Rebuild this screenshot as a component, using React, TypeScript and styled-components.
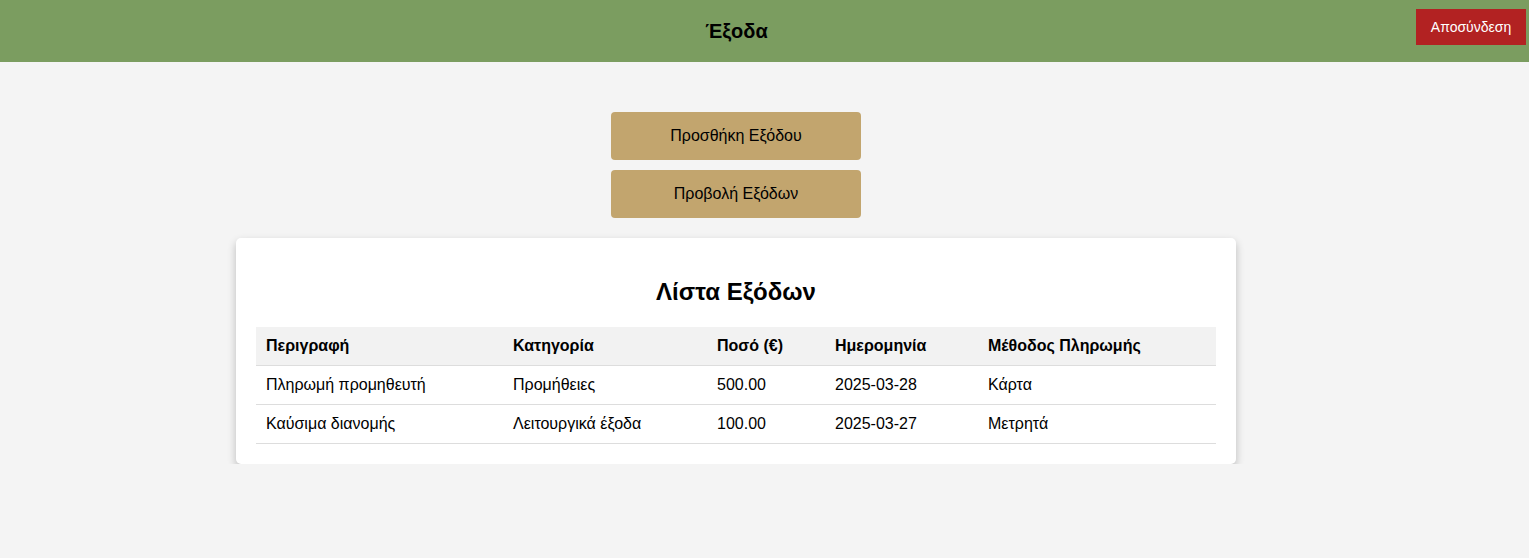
import React from "react";
import styled, { createGlobalStyle } from "styled-components";

const Global = createGlobalStyle`
  html, body { margin: 0; padding: 0; }
  body {
    background: #f4f4f4;
    font-family: "Liberation Sans", Arial, sans-serif;
    color: #000;
  }
`;

const Header = styled.header`
  display: grid;
  grid-template-columns: 1fr auto;
  align-items: start;
  column-gap: 3px;
  height: 62px;
  background: #7b9d60;
  padding-right: 3px;
  box-sizing: border-box;
`;

const Title = styled.h1`
  margin: 0;
  padding-left: 60px;
  font-size: 20px;
  font-weight: bold;
  line-height: 62px;
  text-align: center;
`;

const Logout = styled.button`
  margin-top: 9px;
  width: 110px;
  height: 36px;
  border: none;
  background: #b22222;
  color: #fff;
  font-family: inherit;
  font-size: 14px;
  cursor: pointer;
`;

const Main = styled.main`
  display: flex;
  flex-direction: column;
  align-items: center;
  padding: 50px 57px 0 0;
`;

const Actions = styled.div`
  display: flex;
  flex-direction: column;
  gap: 10px;
  margin-bottom: 20px;
`;

const ActionButton = styled.button`
  width: 250px;
  height: 48px;
  border: none;
  border-radius: 4px;
  background: #c2a56e;
  color: #000;
  font-family: inherit;
  font-size: 16px;
  cursor: pointer;
`;

const Card = styled.section`
  width: 1000px;
  box-sizing: border-box;
  background: #fff;
  border-radius: 5px;
  padding: 20px;
  box-shadow: 0 4px 8px rgba(0, 0, 0, 0.24);
`;

const CardTitle = styled.h2`
  margin: 20px 0 21px;
  font-size: 24px;
  font-weight: bold;
  text-align: center;
`;

const Table = styled.table`
  width: 100%;
  border-collapse: collapse;
  font-size: 16px;
`;

const Th = styled.th<{ $w: number }>`
  width: ${(p) => p.$w}px;
  text-align: left;
  font-weight: bold;
  padding: 10px;
  height: 38px;
  box-sizing: border-box;
  background: #f2f2f2;
  border-bottom: 1px solid #ddd;
`;

const Td = styled.td`
  text-align: left;
  padding: 10px;
  height: 39px;
  box-sizing: border-box;
  border-bottom: 1px solid #ddd;
`;

const columns = [
  { label: "Περιγραφή", w: 247 },
  { label: "Κατηγορία", w: 204 },
  { label: "Ποσό (€)", w: 118 },
  { label: "Ημερομηνία", w: 153 },
  { label: "Μέθοδος Πληρωμής", w: 238 },
];

const rows = [
  ["Πληρωμή προμηθευτή", "Προμήθειες", "500.00", "2025-03-28", "Κάρτα"],
  ["Καύσιμα διανομής", "Λειτουργικά έξοδα", "100.00", "2025-03-27", "Μετρητά"],
];

export default function App() {
  return (
    <>
      <Global />
      <Header>
        <Title>Έξοδα</Title>
        <Logout>Αποσύνδεση</Logout>
      </Header>
      <Main>
        <Actions>
          <ActionButton>Προσθήκη Εξόδου</ActionButton>
          <ActionButton>Προβολή Εξόδων</ActionButton>
        </Actions>
        <Card>
          <CardTitle>Λίστα Εξόδων</CardTitle>
          <Table>
            <thead>
              <tr>
                {columns.map((c) => (
                  <Th key={c.label} $w={c.w}>
                    {c.label}
                  </Th>
                ))}
              </tr>
            </thead>
            <tbody>
              {rows.map((r, i) => (
                <tr key={i}>
                  {r.map((v, j) => (
                    <Td key={j}>{v}</Td>
                  ))}
                </tr>
              ))}
            </tbody>
          </Table>
        </Card>
      </Main>
    </>
  );
}
